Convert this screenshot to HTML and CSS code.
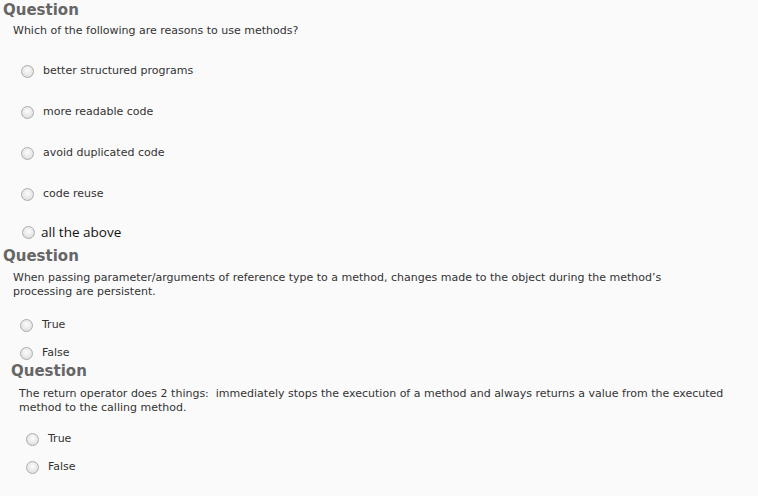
FILE: index.html
```html
<!DOCTYPE html>
<html lang="en">
<head>
  <meta charset="UTF-8">
  <title>Quiz</title>
  <link rel="stylesheet" href="styles.css">
</head>
<body>
  <div class="quiz">
    <div class="question q1">
      <h2>Question</h2>
      <p class="prompt">Which of the following are reasons to use methods?</p>
      <div class="options spaced">
        <label class="option"><input type="radio" name="q1"> better structured programs</label>
        <label class="option"><input type="radio" name="q1"> more readable code</label>
        <label class="option"><input type="radio" name="q1"> avoid duplicated code</label>
        <label class="option"><input type="radio" name="q1"> code reuse</label>
        <label class="option big"><input type="radio" name="q1"> all the above</label>
      </div>
    </div>

    <div class="question q2">
      <h2>Question</h2>
      <p class="prompt">When passing parameter/arguments of reference type to a method, changes made to the object during the method’s<br>processing are persistent.</p>
      <div class="options">
        <label class="option"><input type="radio" name="q2"> True</label>
        <label class="option"><input type="radio" name="q2"> False</label>
      </div>
    </div>

    <div class="question q3">
      <h2>Question</h2>
      <p class="prompt">The return operator does 2 things:&nbsp; immediately stops the execution of a method and always returns a value from the executed<br>method to the calling method.</p>
      <div class="options">
        <label class="option"><input type="radio" name="q3"> True</label>
        <label class="option"><input type="radio" name="q3"> False</label>
      </div>
    </div>
  </div>
</body>
</html>
```

FILE: styles.css
```css
body {
  margin: 0;
  padding: 0;
  background: #fafafa;
  font-family: "DejaVu Sans", Verdana, sans-serif;
  color: #333;
}

.quiz {
  height: 496px;
  padding-top: 1px;
  box-sizing: border-box;
  overflow: hidden;
}

h2 {
  margin: 0;
  padding-left: 3px;
  font-size: 15px;
  line-height: 18px;
  font-weight: bold;
  color: #666;
}

.prompt {
  margin: 5px 0 0 13px;
  font-size: 11px;
  line-height: 14px;
}

.options {
  display: flex;
  flex-direction: column;
  gap: 14px;
  margin-left: 20px;
}

.option {
  display: flex;
  align-items: center;
  font-size: 11px;
  line-height: 14px;
}

input[type="radio"] {
  appearance: none;
  width: 13px;
  height: 13px;
  margin: 0 9px 0 0;
  border: 1px solid #adadad;
  border-radius: 50%;
  background: radial-gradient(circle at 50% 40%, #fdfdfd 0%, #e6e6e6 60%, #d4d4d4 100%);
  box-sizing: border-box;
  flex-shrink: 0;
}

/* first question */
.q1 .options {
  margin-top: 26px;
  gap: 27px;
  margin-left: 21px;
}

.option.big {
  margin-top: -5px;
  margin-left: 1px;
  font-family: "Open Sans", "Noto Sans", sans-serif;
  font-size: 13.5px;
  line-height: 18px;
  color: #111;
}

.option.big input {
  margin-right: 6px;
}

/* second question */
.q2 {
  margin-top: 6px;
}

.q2 .prompt {
  margin-top: 6px;
}

.q2 .options {
  margin-top: 19px;
}

/* third question, sits a bit further right */
.q3 {
  margin-top: 2px;
  margin-left: 8px;
}

.q3 .prompt {
  margin-top: 7px;
  margin-left: 11px;
}

.q3 .options {
  margin-top: 17px;
  margin-left: 18px;
}
```
